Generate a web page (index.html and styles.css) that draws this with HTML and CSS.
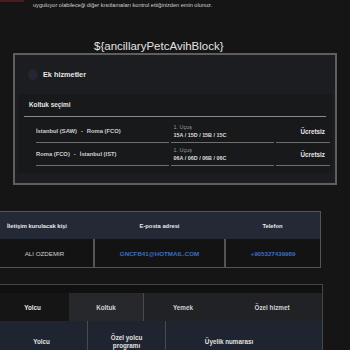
FILE: index.html
```html
<!DOCTYPE html>
<html lang="tr">
<head>
    <meta charset="UTF-8">
    <meta name="viewport" content="width=device-width, initial-scale=1.0">
    <title>Rezervasyon</title>
    <link rel="stylesheet" href="styles.css">
</head>
<body>
    <div class="notice">
        <div class="notice-icon"></div>
        <p class="notice-text">uyguluyor olabileceği diğer kısıtlamaları kontrol ettiğinizden emin olunuz.</p>
    </div>

    <h2 class="block-title">${ancillaryPetcAvihBlock}</h2>

    <div class="ancillary-box">
        <div class="box-head">
            <span class="head-icon"></span>
            <span class="head-text">Ek hizmetler</span>
        </div>
        <div class="panel">
            <div class="panel-title">Koltuk seçimi</div>
            <div class="seat-wrap">
                <table class="seat-table">
                    <tr>
                        <td class="route">İstanbul (SAW)<span class="dash">-</span>Roma (FCO)</td>
                        <td class="flight">
                            <span class="flight-no">1. Uçuş</span>
                            <span class="seats">15A / 15D / 15B / 15C</span>
                        </td>
                        <td class="price">Ücretsiz</td>
                    </tr>
                    <tr>
                        <td class="route">Roma (FCO)<span class="dash">-</span>İstanbul (IST)</td>
                        <td class="flight">
                            <span class="flight-no">1. Uçuş</span>
                            <span class="seats">06A / 06D / 06B / 06C</span>
                        </td>
                        <td class="price">Ücretsiz</td>
                    </tr>
                </table>
            </div>
        </div>
    </div>

    <table class="contact-table">
        <tr>
            <th class="first">İletişim kurulacak kişi</th>
            <th class="mail-col">E-posta adresi</th>
            <th>Telefon</th>
        </tr>
        <tr>
            <td class="name">ALI OZDEMIR</td>
            <td class="link">GNCFB41@HOTMAIL.COM</td>
            <td class="link">+905327439989</td>
        </tr>
    </table>

    <div class="pax-box">
        <div class="pax-band"></div>
        <div class="tabs">
            <div class="tab active">Yolcu</div>
            <div class="tab second">Koltuk</div>
            <div class="tab third">Yemek</div>
            <div class="tab">Özel hizmet</div>
        </div>
        <div class="pax-head">
            <div class="cell">Yolcu</div>
            <div class="cell">Özel yolcu<br>programı</div>
            <div class="cell">Üyelik numarası</div>
            <div class="cell"></div>
        </div>
    </div>
</body>
</html>
```

FILE: styles.css
```css
/* sayfa */
html, body {
    overflow: hidden;
}
body {
    margin: 0;
    background-color: #151515;
    color: #ddd;
    font-family: "Liberation Sans", Arial, sans-serif;
}

/* uyari satiri */
.notice {
    display: flex;
    align-items: flex-start;
    height: 9px;
}
.notice-icon {
    width: 24px;
    height: 2px;
    background-color: #4d1c23;
}
.notice-text {
    margin: 0 0 0 9px;
    font-size: 5.6px;
    line-height: 10px;
    color: #cfcfcf;
}

.block-title {
    margin: 30px 0 0;
    padding-left: 94px;
    font-size: 11.5px;
    font-weight: normal;
    line-height: 14px;
    color: #e2e2e2;
}

/* ek hizmetler kutusu */
.ancillary-box {
    margin: 0 13px;
    border: 2px solid #5e5e5e;
    background-color: #1c1d20;
    padding-bottom: 10px;
}
.box-head {
    display: flex;
    align-items: center;
    height: 39px;
    padding-left: 13px;
}
.head-icon {
    width: 10px;
    height: 11px;
    border-radius: 50%;
    background-color: #23252f;
}
.head-text {
    margin-left: 5px;
    font-size: 7.3px;
    font-weight: bold;
    color: #e6e6e6;
}
.panel {
    margin: 0 3px;
    background-color: #18191b;
    padding-bottom: 7px;
}
.panel-title {
    margin: 0 6px;
    padding-left: 5px;
    height: 22px;
    line-height: 22px;
    font-size: 6.4px;
    font-weight: bold;
    color: #e4e4e4;
    border-bottom: 1px solid #8c8c8c;
}
.seat-wrap {
    padding: 3px 0 0 16px;
}
.seat-table {
    width: 100%;
    border-collapse: separate;
    border-spacing: 2px 0;
}
.seat-table td {
    height: 22px;
    padding: 0;
    border-bottom: 1px solid #6e6e6e;
    vertical-align: middle;
}
.route {
    width: 136px;
    font-size: 5.8px;
    font-weight: bold;
    color: #cfcfcf;
}
.dash {
    margin: 0 4px;
}
.flight {
    width: 104px;
    padding-left: 3px !important;
}
.flight-no {
    display: block;
    font-size: 5.4px;
    line-height: 8px;
    color: #9a9a9a;
}
.seats {
    display: block;
    font-size: 5.4px;
    line-height: 8px;
    font-weight: bold;
    color: #dcdcdc;
}
.price {
    width: 50px;
    padding-right: 5px !important;
    text-align: right;
    font-size: 6.3px;
    font-weight: bold;
    color: #e6e6e6;
}

/* iletisim tablosu */
.contact-table {
    margin: 26px 0 0 -5px;
    width: 326px;
    border-collapse: collapse;
    border: 1px solid #555;
    table-layout: fixed;
}
.contact-table th {
    height: 27px;
    padding: 0;
    background-color: #232a35;
    font-size: 5.8px;
    font-weight: bold;
    color: #e8e8e8;
    text-align: center;
}
.contact-table th.first {
    width: 87px;
    text-align: left;
    padding-left: 11px;
}
.contact-table th.mail-col {
    width: 131px;
}
.contact-table td {
    height: 28px;
    padding: 0;
    text-align: center;
    background-color: #131313;
    font-size: 6.2px;
}
.contact-table td + td {
    border-left: 2px solid #555;
}
.name {
    color: #cfcfcf;
}
.link {
    color: #3b6fc2;
    font-weight: bold;
}

/* yolcu kutusu */
.pax-box {
    margin: 16px 0 0 -5px;
    width: 326px;
    border: 1px solid #474747;
    border-bottom: none;
}
.pax-band {
    height: 8px;
    background-color: #101010;
}
.tabs {
    display: flex;
    height: 28px;
    background-color: #212226;
}
.tab {
    flex: 1;
    display: flex;
    align-items: center;
    justify-content: center;
    font-size: 6.3px;
    font-weight: bold;
    color: #d2d2d2;
}
.tab.active {
    flex: none;
    width: 73px;
    background-color: #151515;
    color: #e6e6e6;
}
.tab.second {
    flex: none;
    width: 74px;
    background-color: #27282b;
    border-right: 1px solid #4a4a4a;
}
.tab.third {
    flex: none;
    width: 78px;
}
.pax-head {
    display: grid;
    grid-template-columns: 92px 78px 126px 1fr;
    height: 42px;
    background-color: #1e2430;
}
.pax-head .cell {
    display: flex;
    align-items: center;
    justify-content: center;
    text-align: center;
    font-size: 6.3px;
    line-height: 8px;
    font-weight: bold;
    color: #e2e2e2;
}
.pax-head .cell:nth-child(1),
.pax-head .cell:nth-child(2) {
    border-right: 1px solid #4a4a4a;
}
```
